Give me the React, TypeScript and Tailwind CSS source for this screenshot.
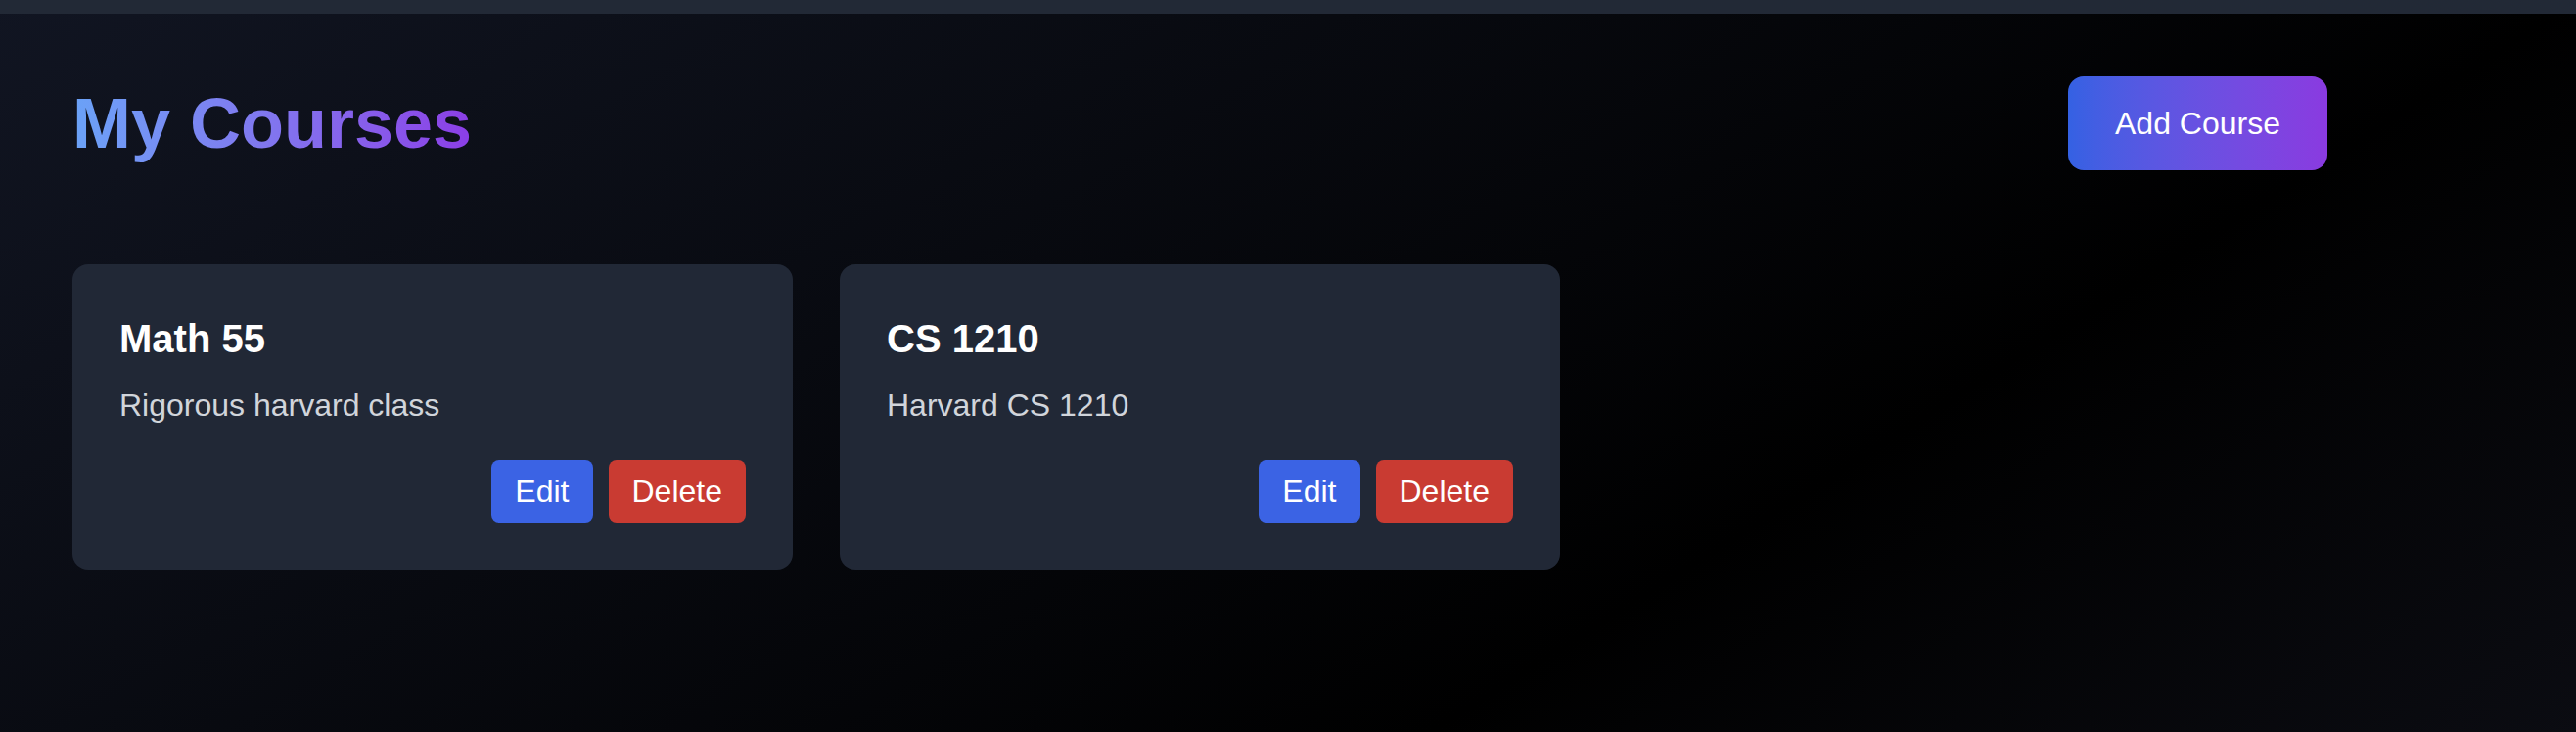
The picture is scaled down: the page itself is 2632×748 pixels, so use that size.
export default function App() {
  const courses = [
    { id: 1, title: "Math 55", description: "Rigorous harvard class" },
    { id: 2, title: "CS 1210", description: "Harvard CS 1210" },
  ]

  return (
    <div
      className="min-h-screen bg-[linear-gradient(147.5deg,#111522_0px,#000_1416px,#0b0c12_2047px)] text-white"
      style={{ fontFamily: '"Liberation Sans", Arial, sans-serif' }}
    >
      <div className="h-[14px] bg-[#222936]" />

      <div className="pl-[74px] pt-16">
        <div className="w-[2304px]">
          {/* HEADER */}
          <div className="flex items-center justify-between mb-24">
            <h1 className="text-[72px] leading-[80px] font-bold bg-gradient-to-r from-[#6aa2f7] to-[#8b3de6] bg-clip-text text-transparent">
              My Courses
            </h1>

            <button className="bg-gradient-to-r from-[#3461e3] to-[#8a3ae0] text-white px-12 py-6 rounded-2xl text-[32px] leading-[48px]">
              Add Course
            </button>
          </div>

          {/* COURSES */}
          <div className="grid grid-cols-3 gap-12">
            {courses.map((c) => (
              <div key={c.id} className="bg-[#212836] rounded-2xl p-12">
                <h2 className="text-[40px] leading-[56px] font-bold text-white mb-4">
                  {c.title}
                </h2>
                <p className="text-[32px] leading-[48px] text-[#d1d5db]">
                  {c.description}
                </p>
                <div className="flex justify-end gap-4 mt-8">
                  <button className="bg-[#3b63e4] text-white px-6 py-2 rounded-lg text-[32px] leading-[48px]">
                    Edit
                  </button>
                  <button className="bg-[#c93b32] text-white px-6 py-2 rounded-lg text-[32px] leading-[48px]">
                    Delete
                  </button>
                </div>
              </div>
            ))}
          </div>
        </div>
      </div>
    </div>
  )
}
